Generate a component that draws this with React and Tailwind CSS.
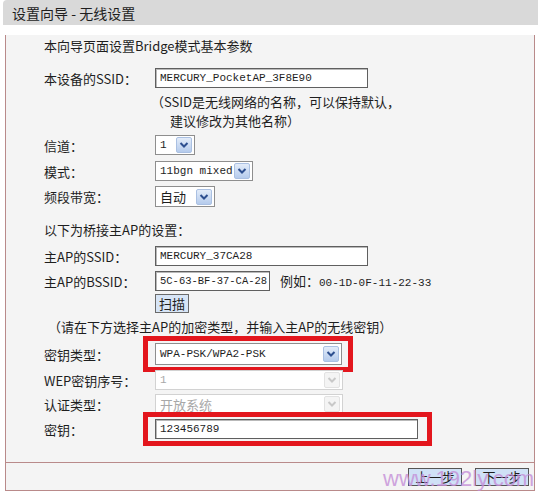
import React from "react";

const Chevron = ({ disabled }) => (
  <div
    className={`flex h-[16px] w-[16px] items-center justify-center rounded-[2px] border ${
      disabled
        ? "border-[#e2e2e2] bg-[#f4f4f4]"
        : "border-[#aac0e2] bg-gradient-to-b from-[#e3ecf9] to-[#b5cbec]"
    }`}
  >
    <svg width="10" height="8" viewBox="0 0 10 8">
      <polyline
        points="1.5,2 5,5.5 8.5,2"
        fill="none"
        stroke={disabled ? "#c8c8c8" : "#2d4f8f"}
        strokeWidth="2"
      />
    </svg>
  </div>
);

const Select = ({ className, children, disabled, mono }) => (
  <div
    className={`flex items-center justify-between whitespace-nowrap border bg-white pl-[4px] pr-[2px] ${
      disabled ? "border-[#d2d2d2] text-[#a8a8a8]" : "border-[#8e8e8e]"
    } ${mono ? "font-['Liberation_Mono',monospace] text-[11px]" : "text-[13px]"} ${className}`}
  >
    <span>{children}</span>
    <Chevron disabled={disabled} />
  </div>
);

const Input = ({ className, children }) => (
  <div
    className={`flex items-center overflow-hidden whitespace-nowrap border border-[#5f5f5f] bg-white pl-[4px] font-['Liberation_Mono',monospace] shadow-[inset_1px_1px_0_#b9b9b9] ${className}`}
  >
    {children}
  </div>
);

const Row = ({ label, className, children }) => (
  <div className={`flex items-center whitespace-nowrap ${className}`}>
    <div className="w-[111px] shrink-0">{label}</div>
    {children}
  </div>
);

export default function App() {
  return (
    <div className="relative h-[495px] w-[540px] overflow-hidden bg-white font-['Noto_Sans_CJK_SC',sans-serif] text-[13px] leading-none text-[#1e1e1e]">
      <div className="ml-[3px] flex h-[25px] w-[535px] items-center rounded-tl-[4px] bg-[#d9d9d9] pl-[9px] text-[14px]">
        设置向导 - 无线设置
      </div>

      <div className="ml-[5px] w-[530px] border-x border-b border-[#b98a8a] bg-[#f4f4f4]">
        <div className="border-b border-[#b98a8a] pb-[16px] pl-[38px]">
          <div className="mt-[10px] flex h-[20px] items-center">本向导页面设置Bridge模式基本参数</div>

          <Row label="本设备的SSID：" className="mt-[13px] h-[20px]">
            <Input className="h-[20px] w-[213px] text-[11px]">MERCURY_PocketAP_3F8E90</Input>
          </Row>

          <div className="mt-[4px] flex h-[19px] items-center pl-[107px]">（SSID是无线网络的名称，可以保持默认，</div>
          <div className="flex h-[19px] items-center pl-[126px]">建议修改为其他名称）</div>

          <Row label="信道：" className="mt-[5px] h-[20px]">
            <Select mono className="h-[20px] w-[40px]">1</Select>
          </Row>
          <Row label="模式：" className="mt-[6px] h-[20px]">
            <Select mono className="h-[20px] w-[98px]">11bgn mixed</Select>
          </Row>
          <Row label="频段带宽：" className="mt-[5px] h-[21px]">
            <Select className="h-[21px] w-[60px]">自动</Select>
          </Row>

          <div className="mt-[12px] flex h-[20px] items-center">以下为桥接主AP的设置：</div>

          <Row label="主AP的SSID：" className="mt-[7px] h-[20px]">
            <Input className="h-[20px] w-[213px] text-[11px]">MERCURY_37CA28</Input>
          </Row>
          <Row label="主AP的BSSID：" className="mt-[5px] h-[20px]">
            <Input className="h-[20px] w-[115px] text-[10.5px]">5C-63-BF-37-CA-28</Input>
            <span className="ml-[10px]">
              例如：<span className="font-['Liberation_Mono',monospace] text-[11px]">00-1D-0F-11-22-33</span>
            </span>
          </Row>
          <div className="mt-[3px] flex h-[19px] items-center pl-[111px]">
            <button className="flex h-[19px] w-[34px] items-center justify-center border border-[#6a6a6a] bg-[#d7e5f6] text-[13px]">
              扫描
            </button>
          </div>

          <div className="mt-[4px] flex h-[19px] items-center pl-[4px]">（请在下方选择主AP的加密类型，并输入主AP的无线密钥）</div>

          <Row label="密钥类型：" className="h-[36px]">
            <div className="-ml-[12px] border-[5px] border-[#e3161d] py-[2px] pl-[7px] pr-[6px]">
              <Select mono className="h-[22px] w-[187px]">WPA-PSK/WPA2-PSK</Select>
            </div>
          </Row>
          <Row label="WEP密钥序号：" className="-mt-[2px] h-[20px]">
            <Select mono disabled className="h-[20px] w-[188px]">1</Select>
          </Row>
          <Row label="认证类型：" className="mt-[4px] h-[20px]">
            <Select disabled className="h-[20px] w-[188px]">开放系统</Select>
          </Row>
          <Row label="密钥：" className="-mt-[2px] h-[34px]">
            <div className="-ml-[12px] border-[5px] border-[#e3161d] py-[2px] pl-[7px] pr-[9px]">
              <Input className="h-[20px] w-[263px] text-[11px]">123456789</Input>
            </div>
          </Row>
        </div>

        <div className="flex h-[27px] items-center justify-end gap-[13px] pr-[5px]">
          <button className="flex h-[18px] w-[54px] items-center justify-center border border-[#555] bg-[#cfe1f6] text-[13px]">
            上一步
          </button>
          <button className="flex h-[18px] w-[54px] items-center justify-center border border-[#555] bg-[#cfe1f6] text-[13px]">
            下一步
          </button>
        </div>
      </div>

      <div className="pointer-events-none absolute left-[383px] top-[468px] font-['Liberation_Sans',sans-serif] text-[22px] leading-none text-[#c58fd8] opacity-80">
        www.192ly.com
      </div>
    </div>
  );
}
